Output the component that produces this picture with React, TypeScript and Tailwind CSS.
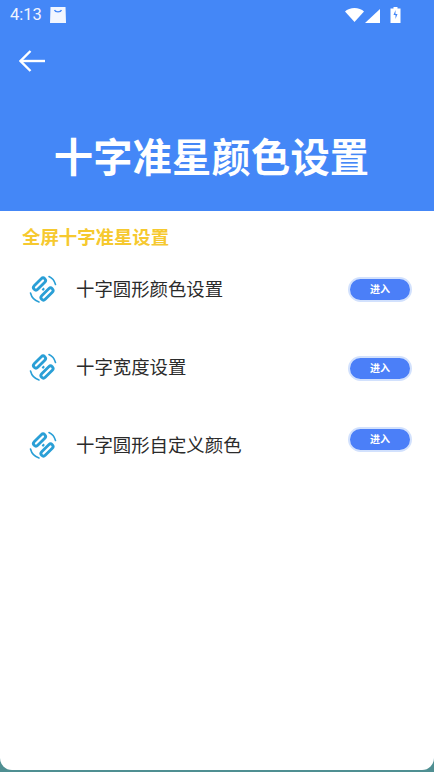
import { FC } from 'react';

const font = { cjk: 'font-["Roboto","Noto_Sans_CJK_SC",sans-serif]' };

const LinkIcon: FC = () => (
    <svg width="30" height="30" viewBox="0 0 30 30" fill="none" stroke="#2a9fd6" className="-mt-[2px]">
        <path d="M14.500 14.500l1.500 1.500" strokeWidth="2.500" />
        <rect x="4" y="7.500" width="15" height="5" rx="2.500" strokeWidth="2.800" transform="rotate(-45 11.500 10)" />
        <rect x="11.500" y="17.500" width="15" height="5" rx="2.500" strokeWidth="2.800" transform="rotate(-45 19 20)" />
        <path d="M21 2.500c3 1.300 5.400 4 6.500 8" strokeWidth="1.600" strokeLinecap="round" />
        <path d="M2.500 19c1 4 4 7.500 8.500 9" strokeWidth="1.600" strokeLinecap="round" />
    </svg>
);

const EnterButton: FC<{ className?: string }> = ({ className }) => (
    <button className={`w-[64px] h-[25px] rounded-full bg-[#4b7ff8] border-2 border-[#d2e1fd] text-white text-[10px] font-bold flex items-center justify-center ${className ?? ''}`}>
        进入
    </button>
);

const rows = [
    { label: '十字圆形颜色设置', btn: 'mb-[1px]' },
    { label: '十字宽度设置', btn: '' },
    { label: '十字圆形自定义颜色', btn: 'mb-[14px]' },
];

export default function App() {
    return (
        <div className={`w-[434px] h-[772px] bg-[#4f8f92] overflow-hidden ${font.cjk}`}>
            <div className="h-[770px] bg-white rounded-b-[12px] overflow-hidden">
                <header className="h-[211px] bg-[#4487f7] text-white flex flex-col">
                    <div className="h-[30px] pl-[10px] pr-[33px] flex items-center justify-between">
                        <div className="flex items-center gap-[7px]">
                            <span className="text-[16.500px] text-[#f0f5ff] leading-none">4:13</span>
                            <svg width="18" height="18" viewBox="0 0 18 18">
                                <path d="M1.500 1h15l.5 16H1z" fill="#f2f6ff" />
                                <path d="M5.500 4c.8 2.400 6.200 2.400 7 0" fill="none" stroke="#4487f7" strokeWidth="1.300" />
                            </svg>
                        </div>
                        <div className="flex items-center gap-[9px]">
                            <svg width="36" height="18" viewBox="0 0 36 18">
                                <path d="M0 5.500C2 3.500 6 2 9.500 2s7.500 1.500 9.500 3.500L9.500 16z" fill="#fff" />
                                <path d="M35 3v14H20z" fill="#fff" />
                            </svg>
                            <svg width="11" height="18" viewBox="0 0 11 18">
                                <path d="M3.500 1h4v1.500H10.500V17H.5V2.500h3z" fill="#fff" />
                                <path d="M5.500 4L3.500 9h2v4l2-5h-2z" fill="#4487f7" />
                            </svg>
                        </div>
                    </div>
                    <div className="pl-[19px] pt-[20px] h-[47px]">
                        <svg width="26" height="22" viewBox="0 0 26 22" fill="none" stroke="#fff" strokeWidth="2.400">
                            <path d="M26 11H2" />
                            <path d="M11.500 1L1.500 11l10 10" />
                        </svg>
                    </div>
                    <h1 className="mt-[54px] pr-[11px] text-center text-[39.250px] leading-[56px] font-bold tracking-[0.2px]">十字准星颜色设置</h1>
                </header>
                <h2 className="pl-[22px] pt-[14px] text-[18.400px] leading-[26px] font-bold text-[#f6c92f]">全屏十字准星设置</h2>
                <ul>
                    {rows.map((row) => (
                        <li key={row.label} className="h-[78px] pl-[28px] pr-[22px] flex items-center">
                            <LinkIcon />
                            <span className="ml-[18px] text-[18.400px] text-[#2b2b2b] flex-1">{row.label}</span>
                            <EnterButton className={row.btn} />
                        </li>
                    ))}
                </ul>
            </div>
        </div>
    );
}
